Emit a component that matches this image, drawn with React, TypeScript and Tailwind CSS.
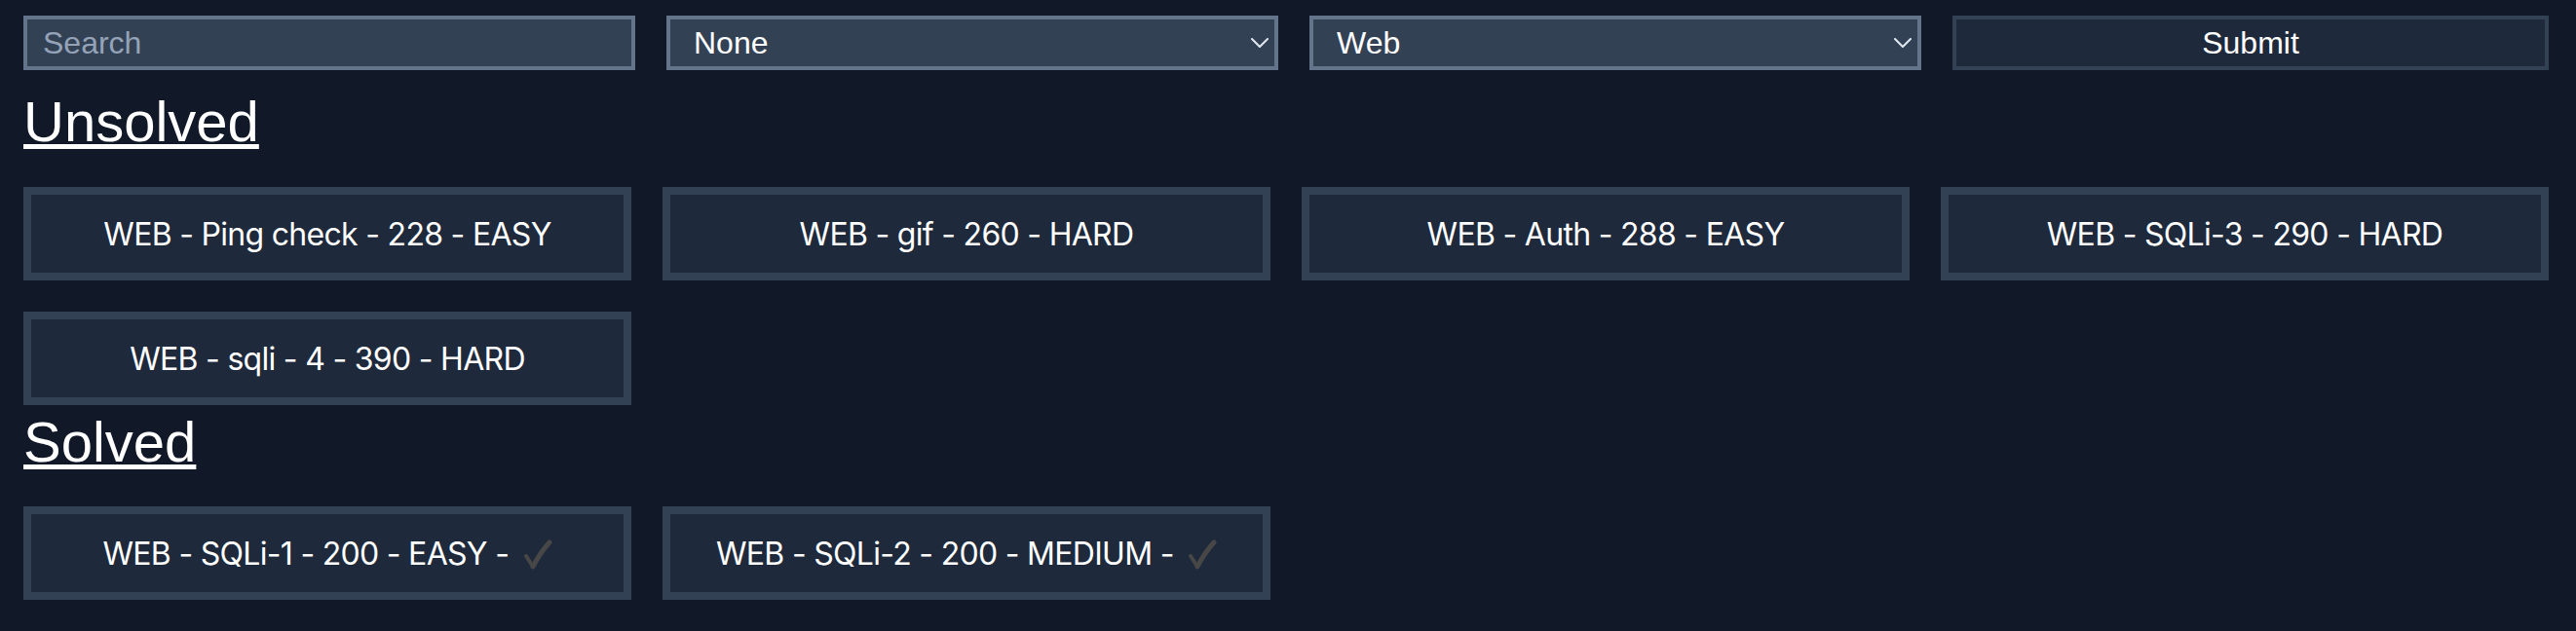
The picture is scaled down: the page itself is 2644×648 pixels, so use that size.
import React from 'react';

type Challenge = {
  category: string;
  name: string;
  points: number;
  difficulty: string;
};

const UNSOLVED: Challenge[] = [
  { category: 'WEB', name: 'Ping check', points: 228, difficulty: 'EASY' },
  { category: 'WEB', name: 'gif', points: 260, difficulty: 'HARD' },
  { category: 'WEB', name: 'Auth', points: 288, difficulty: 'EASY' },
  { category: 'WEB', name: 'SQLi-3', points: 290, difficulty: 'HARD' },
  { category: 'WEB', name: 'sqli - 4', points: 390, difficulty: 'HARD' },
];

const SOLVED: Challenge[] = [
  { category: 'WEB', name: 'SQLi-1', points: 200, difficulty: 'EASY' },
  { category: 'WEB', name: 'SQLi-2', points: 200, difficulty: 'MEDIUM' },
];

function Check() {
  return (
    <svg width="30" height="32" viewBox="0 0 30 32" className="ml-[6px] inline-block translate-y-[1px]" fill="none">
      <path d="M3 17 Q7 23 10 28" stroke="#474747" strokeWidth="4" strokeLinecap="round" />
      <path d="M10 28 Q17 14 27 3" stroke="#474747" strokeWidth="5" strokeLinecap="round" />
    </svg>
  );
}

function Chevron() {
  return (
    <svg
      width="18"
      height="10"
      viewBox="0 0 18 10"
      fill="none"
      className="pointer-events-none absolute right-[10px] top-1/2 -translate-y-1/2"
    >
      <path d="M1 1 L9 9 L17 1" stroke="#e2e8f0" strokeWidth="2" strokeLinecap="round" strokeLinejoin="round" />
    </svg>
  );
}

function Select({ value, options }: { value: string; options: string[] }) {
  return (
    <div className="relative">
      <select
        defaultValue={value}
        className="h-14 w-full appearance-none rounded-none border-4 border-[#64748b] bg-[#334155] pl-6 text-[32px] text-white outline-none font-['Liberation_Sans',Arial,sans-serif]"
      >
        {options.map((o) => (
          <option key={o}>{o}</option>
        ))}
      </select>
      <Chevron />
    </div>
  );
}

function Card({ c, solved }: { c: Challenge; solved?: boolean }) {
  return (
    <div className="flex h-24 items-center justify-center border-8 border-[#334155] bg-[#1e293b] text-[32px] tracking-[-0.7px] text-white font-['Inter',sans-serif]">
      <span className="flex items-center whitespace-pre pt-[2px]">
        {`${c.category} - ${c.name} - ${c.points} - ${c.difficulty}`}
        {solved && (
          <>
            {' - '}
            <Check />
          </>
        )}
      </span>
    </div>
  );
}

export default function App() {
  return (
    <div className="min-h-screen bg-[#111827]">
      <div className="ml-6 w-[2592px] pt-4">
        {/* Filters */}
        <div className="grid grid-cols-[628px_628px_628px_1fr] gap-8">
          <input
            placeholder="Search"
            className="h-14 w-full rounded-none border-4 border-[#64748b] bg-[#334155] pl-4 text-[32px] text-white outline-none placeholder:text-[#94a3b8] font-['Liberation_Sans',Arial,sans-serif]"
          />
          <Select value="None" options={['None', 'EASY', 'MEDIUM', 'HARD']} />
          <Select value="Web" options={['All', 'Web', 'Crypto', 'Pwn']} />
          <button className="h-14 w-full border-4 border-[#334155] bg-[#1e293b] text-[32px] text-white font-['Liberation_Sans',Arial,sans-serif]">
            Submit
          </button>
        </div>

        <h2 className="mt-[21px] text-[58px] leading-[64px] text-white underline font-['Liberation_Sans',Arial,sans-serif]">
          Unsolved
        </h2>
        <div className="mt-[35px] grid grid-cols-4 gap-8">
          {UNSOLVED.map((c) => (
            <Card key={c.name} c={c} />
          ))}
        </div>

        <h2 className="mt-[6px] text-[58px] leading-[64px] text-white underline font-['Liberation_Sans',Arial,sans-serif]">
          Solved
        </h2>
        <div className="mt-[34px] grid grid-cols-4 gap-8">
          {SOLVED.map((c) => (
            <Card key={c.name} c={c} solved />
          ))}
        </div>
      </div>
    </div>
  );
}
